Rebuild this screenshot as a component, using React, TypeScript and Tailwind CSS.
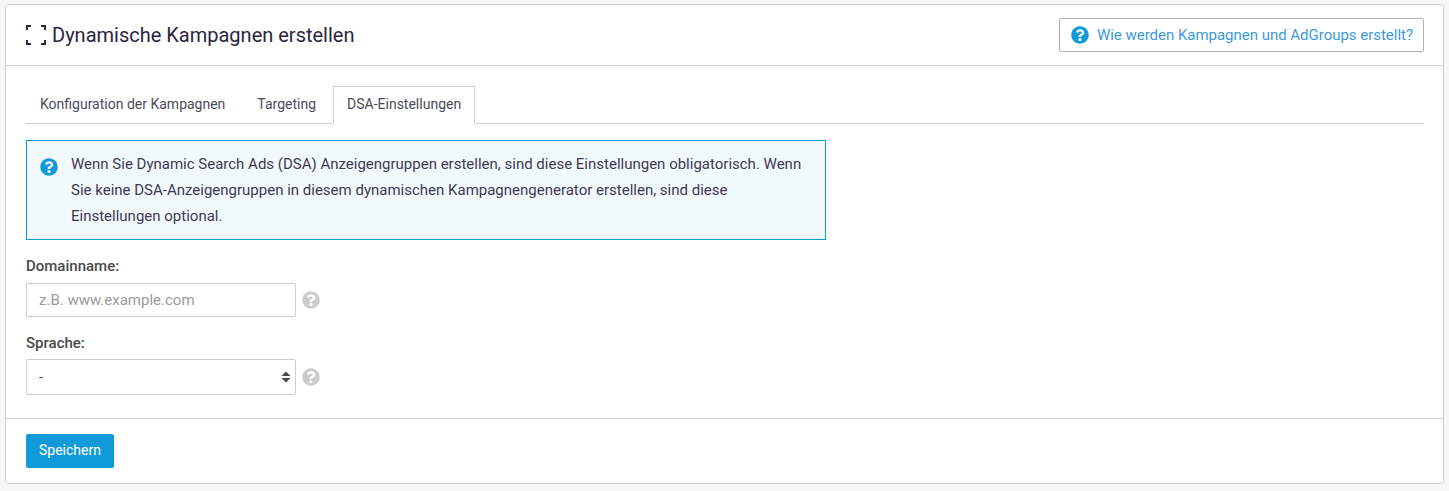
import { FaQuestionCircle } from "react-icons/fa";

function FocusIcon() {
  return (
    <svg width="20" height="20" viewBox="0 0 20 20" fill="none" stroke="#2b2540" strokeWidth="2" className="shrink-0">
      <path d="M1 5V1H5M15 1H19V5M1 15V19H5M15 19H19V15" />
    </svg>
  );
}

export default function App() {
  return (
    <div className="h-[491px] bg-[#f6f6f6] pt-1 px-[5px] font-['Roboto',sans-serif] text-[15px] text-[#4a4a4a]">
      <div className="h-[480px] bg-white border border-[#cfcfcf] rounded-[3px] flex flex-col">
        {/* header */}
        <div className="h-[61px] shrink-0 flex items-center justify-between pl-5 pr-[19px] border-b border-[#cccccc]">
          <div className="flex items-center gap-[6px]">
            <FocusIcon />
            <h1 className="text-[20px] leading-6 text-[#2b2540]">Dynamische Kampagnen erstellen</h1>
          </div>
          <a className="h-[34px] flex items-center gap-[8px] pl-[11px] pr-[10px] border border-[#b0b0bc] rounded-[2px] text-[#3d9ad9] tracking-[-0.02px]">
            <FaQuestionCircle className="text-[#119ad9] text-[18px]" />
            Wie werden Kampagnen und AdGroups erstellt?
          </a>
        </div>

        {/* body */}
        <div className="flex-1 pl-5 pr-[19px] pt-5 border-b border-[#cccccc]">
          <div className="flex h-[38px] border-b border-[#cccccc]">
            <div className="h-[37px] flex items-center px-[14px] mr-[4px] text-[14px] text-[#4b4b5a]">
              Konfiguration der Kampagnen
            </div>
            <div className="h-[37px] flex items-center px-[14px] mr-[3px] text-[14px] text-[#4b4b5a]">
              Targeting
            </div>
            <div className="h-[38px] flex items-center px-[13px] pb-[2px] bg-white border border-[#cccccc] border-b-white text-[14px] text-[#4b4b5a]">
              DSA-Einstellungen
            </div>
          </div>

          <div className="w-[800px] h-[100px] mt-4 flex bg-[#f2f9fd] border border-[#119ad9] pl-[13px] pr-4 pt-[10px] text-[#3f3a52] leading-[26px]">
            <FaQuestionCircle className="text-[#119ad9] text-[18px] mt-[7px] mr-[13px] shrink-0" />
            <p>
              Wenn Sie Dynamic Search Ads (DSA) Anzeigengruppen erstellen, sind diese Einstellungen obligatorisch. Wenn Sie keine DSA-Anzeigengruppen in diesem dynamischen Kampagnengenerator erstellen, sind diese Einstellungen optional.
            </p>
          </div>

          <label className="block mt-[17px] font-medium leading-[18px] text-[#4a4a4a]">Domainname:</label>
          <div className="flex items-center mt-[8px]">
            <input
              placeholder="z.B. www.example.com"
              className="w-[270px] h-[34px] px-3 border border-[#cccccc] rounded-[2px] outline-none placeholder:text-[#9b9b9b]"
            />
            <FaQuestionCircle className="ml-[6px] text-[#cccccc] text-[18px]" />
          </div>

          <label className="block mt-[17px] font-medium leading-[18px] text-[#4a4a4a]">Sprache:</label>
          <div className="flex items-center mt-[7px]">
            <div className="w-[270px] h-[36px] pl-3 pr-[4px] flex items-center justify-between border border-[#cccccc] rounded-[2px]">
              <span>-</span>
              <svg width="10" height="12" viewBox="0 0 10 12" fill="#4a4a4a">
                <path d="M5 0.5L9.5 5H0.5ZM5 11.5L0.5 7H9.5Z" />
              </svg>
            </div>
            <FaQuestionCircle className="ml-[6px] text-[#cccccc] text-[18px]" />
          </div>
        </div>

        {/* footer */}
        <div className="h-[64px] shrink-0 pl-5 pt-[15px]">
          <button className="w-[88px] h-[34px] pb-[2px] bg-[#119ad9] rounded-[2px] text-white text-[14px]">Speichern</button>
        </div>
      </div>
    </div>
  );
}
